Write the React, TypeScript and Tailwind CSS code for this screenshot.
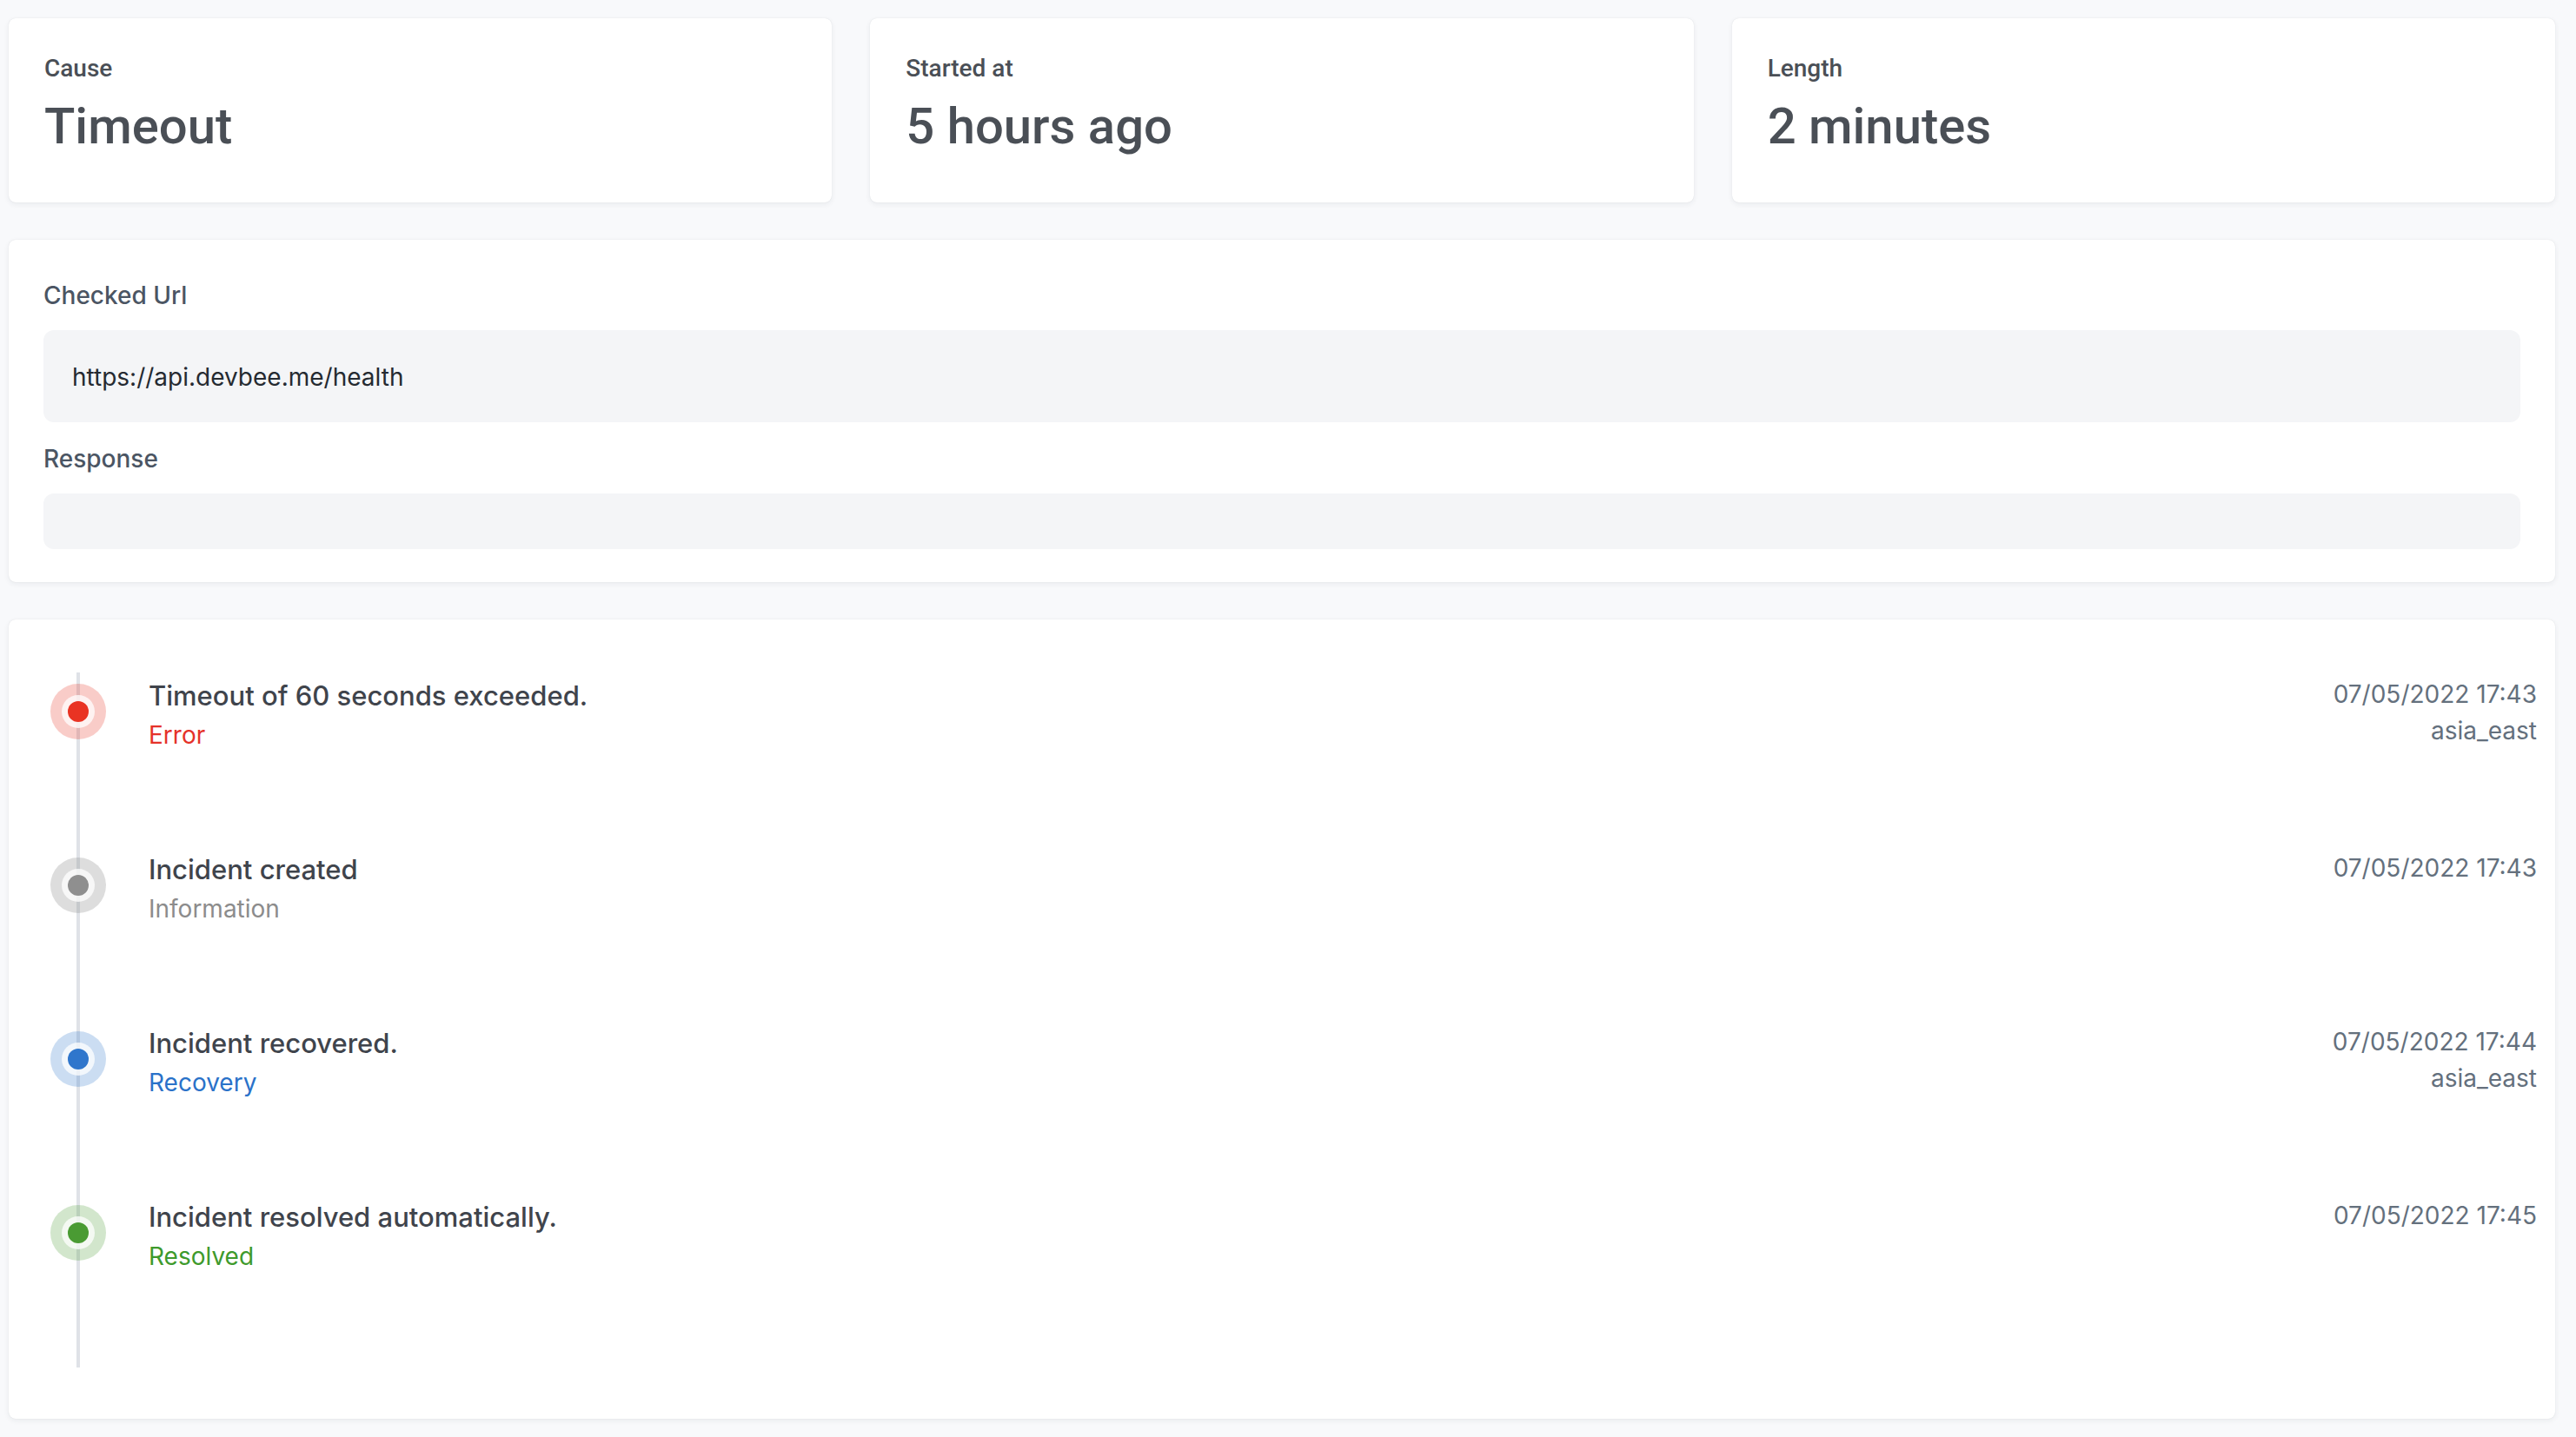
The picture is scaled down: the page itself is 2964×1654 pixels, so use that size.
import React from 'react';

type Stat = { label: string; value: string };

type Event = {
    title: string;
    kind: string;
    date: string;
    region?: string;
    dot: string;
    ring: string;
    text: string;
};

const stats: Stat[] = [
    { label: 'Cause', value: 'Timeout' },
    { label: 'Started at', value: '5 hours ago' },
    { label: 'Length', value: '2 minutes' },
];

const events: Event[] = [
    {
        title: 'Timeout of 60 seconds exceeded.',
        kind: 'Error',
        date: '07/05/2022 17:43',
        region: 'asia_east',
        dot: 'bg-[#e93323]',
        ring: 'bg-[#e93323]/25',
        text: 'text-[#e5322a]',
    },
    {
        title: 'Incident created',
        kind: 'Information',
        date: '07/05/2022 17:43',
        dot: 'bg-[#8f8f8f]',
        ring: 'bg-[#8f8f8f]/30',
        text: 'text-[#8c8c8c]',
    },
    {
        title: 'Incident recovered.',
        kind: 'Recovery',
        date: '07/05/2022 17:44',
        region: 'asia_east',
        dot: 'bg-[#2f76cc]',
        ring: 'bg-[#2f76cc]/25',
        text: 'text-[#2a72c9]',
    },
    {
        title: 'Incident resolved automatically.',
        kind: 'Resolved',
        date: '07/05/2022 17:45',
        dot: 'bg-[#4a9b33]',
        ring: 'bg-[#4a9b33]/25',
        text: 'text-[#3e9a2c]',
    },
];

const card = 'rounded-[8px] bg-white shadow-[0_2px_6px_rgba(30,40,60,0.07),0_0_1px_rgba(30,40,60,0.14)]';

function StatCard({ label, value }: Stat) {
    return (
        <div className={`${card} px-[41px] pt-[38px] pb-[52px] font-['Roboto',sans-serif] text-[#4a4f56]`}>
            <div className="text-[28px] font-medium leading-[40px]">{label}</div>
            <div className="mt-[10px] text-[58px] font-medium leading-[72px]">{value}</div>
        </div>
    );
}

function CheckDetails() {
    return (
        <div className={`${card} px-[40px] pt-[42px] pb-[38px]`}>
            <div className="mb-[18px] text-[28px] font-medium leading-[44px] text-[#4b5563]">Checked Url</div>
            <div className="rounded-[12px] bg-[#f4f5f7] px-[33px] pt-[34px] pb-[32px] text-[28px] leading-[40px] text-[#252a31]">
                https://api.devbee.me/health
            </div>
            <div className="mt-[20px] mb-[18px] text-[28px] font-medium leading-[44px] text-[#4b5563]">Response</div>
            <div className="h-[64px] rounded-[12px] bg-[#f4f5f7]" />
        </div>
    );
}

function Marker({ dot, ring }: { dot: string; ring: string }) {
    return (
        <div className={`flex h-[64px] w-[64px] items-center justify-center rounded-full ${ring}`}>
            <div className="flex h-[38px] w-[38px] items-center justify-center rounded-full bg-white/75">
                <div className={`h-[24px] w-[24px] rounded-full ${dot}`} />
            </div>
        </div>
    );
}

function Timeline() {
    return (
        <div className={`${card} relative pt-[61px] pb-[59px] pl-[48px] pr-[21px]`}>
            <div className="absolute top-[61px] bottom-[59px] left-[78px] w-[4px] bg-[#dfe2e7]" />
            {events.map((e) => (
                <div key={e.title} className="relative flex h-[200px]">
                    <div className="shrink-0 pt-[13px]">
                        <Marker dot={e.dot} ring={e.ring} />
                    </div>
                    <div className="ml-[49px] flex flex-1 justify-between">
                        <div className="pt-[5px]">
                            <div className="text-[31px] font-medium leading-[44px] text-[#3f444c]">{e.title}</div>
                            <div className={`mt-[3px] text-[28px] leading-[40px] ${e.text}`}>{e.kind}</div>
                        </div>
                        <div className="pt-[4px] text-right text-[28px] leading-[42px] text-[#64707d]">
                            <div>{e.date}</div>
                            {e.region && <div>{e.region}</div>}
                        </div>
                    </div>
                </div>
            ))}
        </div>
    );
}

export default function App() {
    return (
        <div className="min-h-screen bg-[#f8f9fb] pt-[21px] pb-[19px] pl-[10px] pr-[24px] font-['Inter',sans-serif]">
            <div className="grid grid-cols-3 gap-[44px]">
                {stats.map((s) => (
                    <StatCard key={s.label} {...s} />
                ))}
            </div>
            <div className="mt-[43px]">
                <CheckDetails />
            </div>
            <div className="mt-[43px]">
                <Timeline />
            </div>
        </div>
    );
}
